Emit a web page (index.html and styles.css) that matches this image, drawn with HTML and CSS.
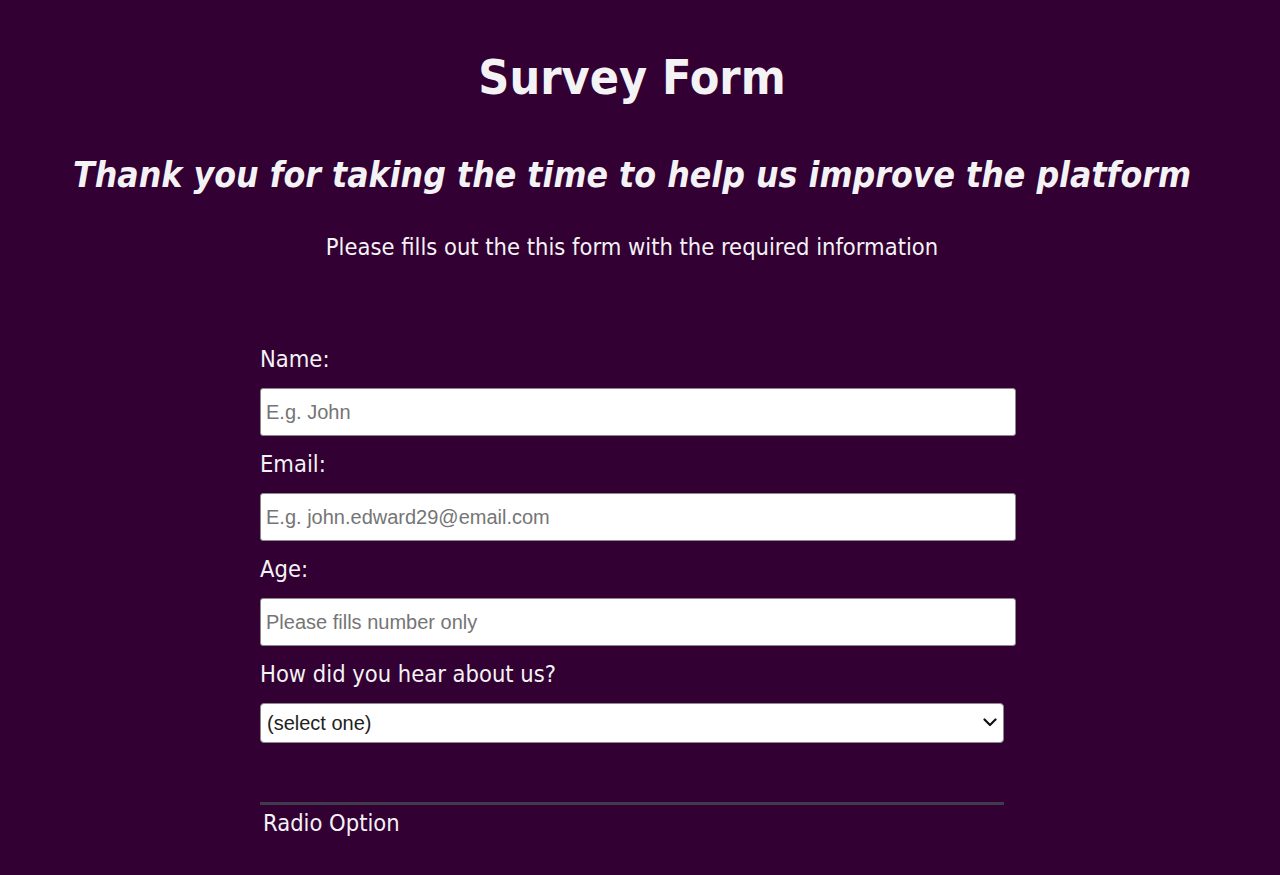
FILE: index.html
```html
<!DOCTYPE html>
<html lang="en">
<head>
<meta charset="utf-8">
<title>Survey Form</title>
<link rel="stylesheet" href="styles.css">
</head>
<body>
<header class="header">
  <h1 class="title">Survey Form</h1>
  <h2 class="subtitle">Thank you for taking the time to help us improve the platform</h2>
  <p class="description">Please fills out the this form with the required information</p>
</header>
<form class="survey">
  <div class="group">
    <label class="label" for="name">Name:</label>
    <input class="field" id="name" type="text" placeholder="E.g. John">
  </div>
  <div class="group">
    <label class="label" for="email">Email:</label>
    <input class="field" id="email" type="email" placeholder="E.g. john.edward29@email.com">
  </div>
  <div class="group">
    <label class="label" for="age">Age:</label>
    <input class="field" id="age" type="number" placeholder="Please fills number only">
  </div>
  <div class="group">
    <label class="label" for="hear">How did you hear about us?</label>
    <div class="select-wrap">
      <select class="dropdown" id="hear">
        <option>(select one)</option>
        <option>Friends</option>
        <option>Social media</option>
      </select>
      <svg class="chevron" width="14" height="9" viewBox="0 0 14 9" aria-hidden="true"><path d="M1.5 1.5 L7 7 L12.5 1.5" fill="none" stroke="#111" stroke-width="2.2" stroke-linecap="round" stroke-linejoin="round"/></svg>
    </div>
  </div>
  <hr class="divider">
  <div class="radio-title">Radio Option</div>
</form>
</body>
</html>
```
FILE: styles.css
```css
html, body {
  margin: 0;
  padding: 0;
}
body {
  background: #330033;
  color: #f3f3f5;
  font-family: "DejaVu Sans Condensed", "DejaVu Sans", sans-serif;
  font-stretch: condensed;
  height: 875px;
  overflow: hidden;
}
.header {
  text-align: center;
  padding: 50px 16px 0 0;
}
.title {
  margin: 0;
  font-size: 48px;
  line-height: 54px;
  font-weight: bold;
}
.subtitle {
  margin: 49px 0 0 0;
  font-size: 35.3px;
  line-height: 44px;
  font-style: italic;
  font-weight: bold;
  white-space: nowrap;
}
.description {
  margin: 36px 0 0 0;
  font-size: 23.5px;
  line-height: 28px;
}
.survey {
  width: 756px;
  margin: 84px auto 0 260px;
}
.group {
  display: flex;
  flex-direction: column;
  align-items: flex-start;
}
.label {
  font-size: 23.5px;
  line-height: 28px;
}
.field {
  box-sizing: border-box;
  width: 756px;
  height: 48px;
  margin: 15px 0 14px 0;
  padding: 0 5px;
  border: 1px solid #8a8a8a;
  border-radius: 3px;
  background: #fff;
  font-family: "Liberation Sans", Arial, sans-serif;
  font-size: 20px;
  color: #222;
}
.field::placeholder {
  color: #757575;
}
.select-wrap {
  position: relative;
  margin: 15px 0 0 0;
}
.dropdown {
  display: block;
  box-sizing: border-box;
  width: 744px;
  height: 40px;
  padding: 0 30px 0 6px;
  border: 1px solid #8a8a8a;
  border-radius: 4px;
  background: #fff;
  font-family: "Liberation Sans", Arial, sans-serif;
  font-size: 20px;
  color: #222;
  appearance: none;
  -webkit-appearance: none;
}
.chevron {
  position: absolute;
  right: 7px;
  top: 15px;
  pointer-events: none;
}
.divider {
  width: 744px;
  height: 3px;
  margin: 59px 0 0 0;
  border: none;
  background: #3f3a4c;
}
.radio-title {
  font-size: 23.5px;
  line-height: 28px;
  margin: 4px 0 0 3px;
}
```
